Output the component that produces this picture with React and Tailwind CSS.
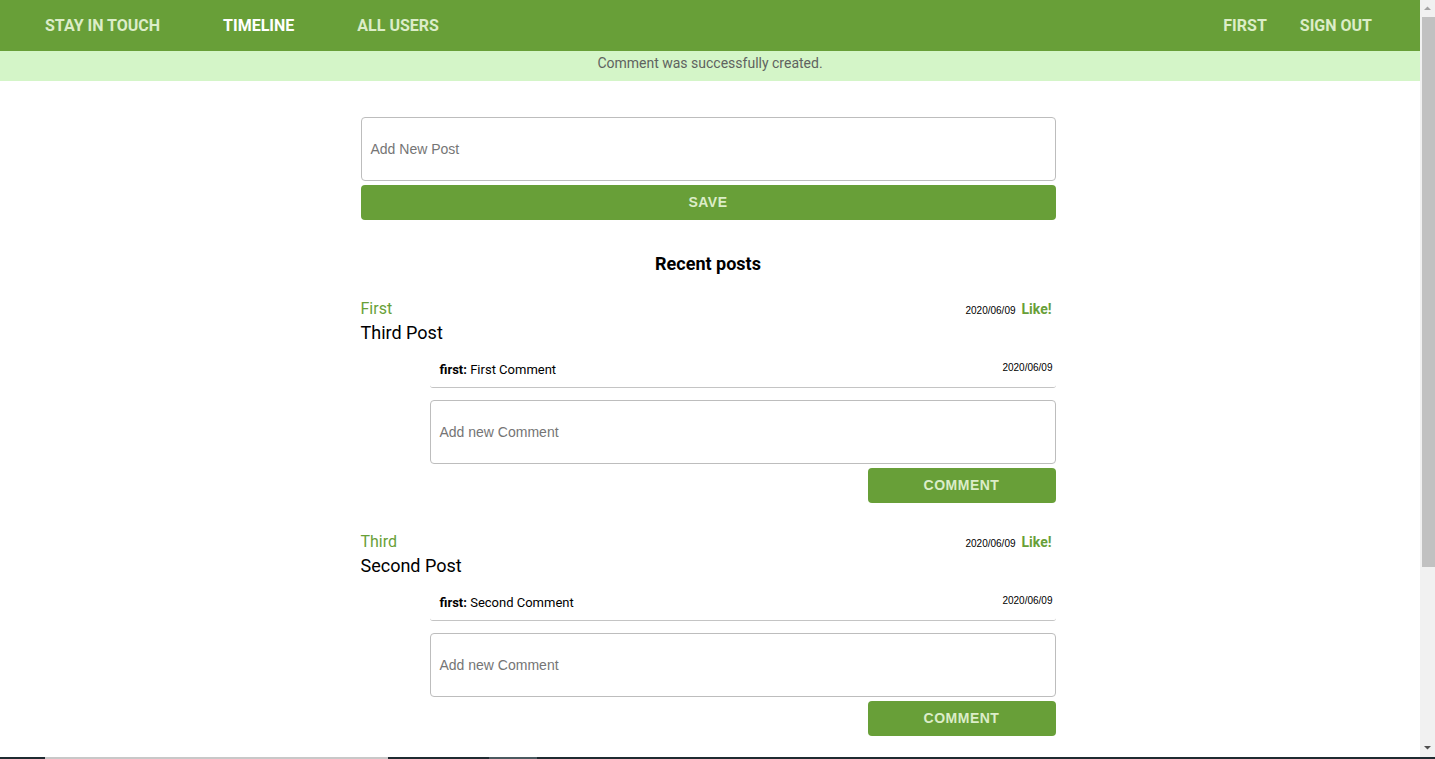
import React from "react";

const posts = [
    { author: "First", body: "Third Post", date: "2020/06/09", comment: { user: "first", text: "First Comment", date: "2020/06/09" } },
    { author: "Third", body: "Second Post", date: "2020/06/09", comment: { user: "first", text: "Second Comment", date: "2020/06/09" } },
];

const roboto = { fontFamily: "Roboto, 'Liberation Sans', sans-serif" };

const Post = ({ post }) => (
    <div className="mt-[29px] first-of-type:mt-[24px]">
        <div className="flex h-[20px] items-center justify-between">
            <span className="text-[16px] text-[#689f38]">{post.author}</span>
            <div className="flex items-center pr-[4px]">
                <span className="mt-[3px] text-[10px] text-black font-['Liberation_Sans',sans-serif]">{post.date}</span>
                <span className="ml-[6px] text-[14px] font-bold text-[#689f38]">Like!</span>
            </div>
        </div>
        <div className="mt-[3px] h-[22px] text-[18px] leading-[22px] text-black">{post.body}</div>
        <div className="ml-[69px]">
            <div className="mt-[8px] flex h-[36px] items-center justify-between rounded-b-[3px] border-b border-[#c4c4c4] px-[10px] pr-[3px]">
                <span className="text-[13px] text-black">
                    <b>{post.comment.user}:</b> {post.comment.text}
                </span>
                <span className="-mt-[4px] text-[10px] text-black font-['Liberation_Sans',sans-serif]">{post.comment.date}</span>
            </div>
            <div className="mt-[12px] flex h-[64px] items-center rounded-[4px] border border-[#bdbdbd] px-[9px] text-[14px] text-[#757575] font-['Liberation_Sans',sans-serif]">
                Add new Comment
            </div>
            <div className="mt-[4px] flex justify-end">
                <button className="h-[35px] w-[188px] rounded-[4px] bg-[#689f38] text-[14px] font-bold tracking-[0.5px] text-[#dcedc8] font-['Liberation_Sans',sans-serif]">
                    COMMENT
                </button>
            </div>
        </div>
    </div>
);

const App = () => {
    return (
        <div className="flex h-[759px] flex-col overflow-hidden bg-white" style={roboto}>
            <div className="flex min-h-0 flex-1">
                {/* page */}
                <div className="min-w-0 flex-1 overflow-hidden">
                    <nav className="flex h-[51px] items-center justify-between bg-[#689f38] text-[16px] font-bold text-[#dcedc8]">
                        <div className="flex items-center gap-[63px] pl-[45px]">
                            <span>STAY IN TOUCH</span>
                            <span className="text-white">TIMELINE</span>
                            <span>ALL USERS</span>
                        </div>
                        <div className="flex items-center gap-[33px] pr-[48px]">
                            <span>FIRST</span>
                            <span>SIGN OUT</span>
                        </div>
                    </nav>
                    <div className="flex h-[30px] items-center justify-center bg-[#d4f5c8] pb-[6px] text-[14px] text-[#5f6360]">
                        Comment was successfully created.
                    </div>

                    <div className="mx-auto w-[695px] -translate-x-[2px]">
                        <div className="mt-[36px] flex h-[64px] items-center rounded-[4px] border border-[#bdbdbd] px-[9px] text-[14px] text-[#757575] font-['Liberation_Sans',sans-serif]">
                            Add New Post
                        </div>
                        <button className="mt-[4px] h-[35px] w-full rounded-[4px] bg-[#689f38] text-[14px] font-bold tracking-[0.5px] text-[#dcedc8] font-['Liberation_Sans',sans-serif]">
                            SAVE
                        </button>
                        <h2 className="mt-[33px] text-center text-[18px] font-bold leading-[22px] text-black">Recent posts</h2>
                        <div>
                            {posts.map((p, i) => (
                                <Post key={i} post={p} />
                            ))}
                        </div>
                    </div>
                </div>

                {/* scrollbar */}
                <div className="flex w-[15px] flex-col items-center bg-[#f1f1f1]">
                    <svg width="15" height="17" viewBox="0 0 15 17" className="shrink-0">
                        <path d="M4 10 L7.5 6.5 L11 10 Z" fill="#a3a3a3" />
                    </svg>
                    <div className="ml-[2px] h-[550px] w-[13px] bg-[#c1c1c1]" />
                    <div className="flex-1" />
                    <svg width="15" height="17" viewBox="0 0 15 17" className="shrink-0">
                        <path d="M4 6 L7.5 9.5 L11 6 Z" fill="#505050" />
                    </svg>
                </div>
            </div>
            <div className="flex h-[2px] bg-[#1f2b31]">
                <div className="w-[45px]" />
                <div className="w-[343px] bg-[#c8c8c8]" />
                <div className="w-[101px]" />
                <div className="w-[48px] bg-[#4b5a60]" />
            </div>
        </div>
    );
};

export default App;
